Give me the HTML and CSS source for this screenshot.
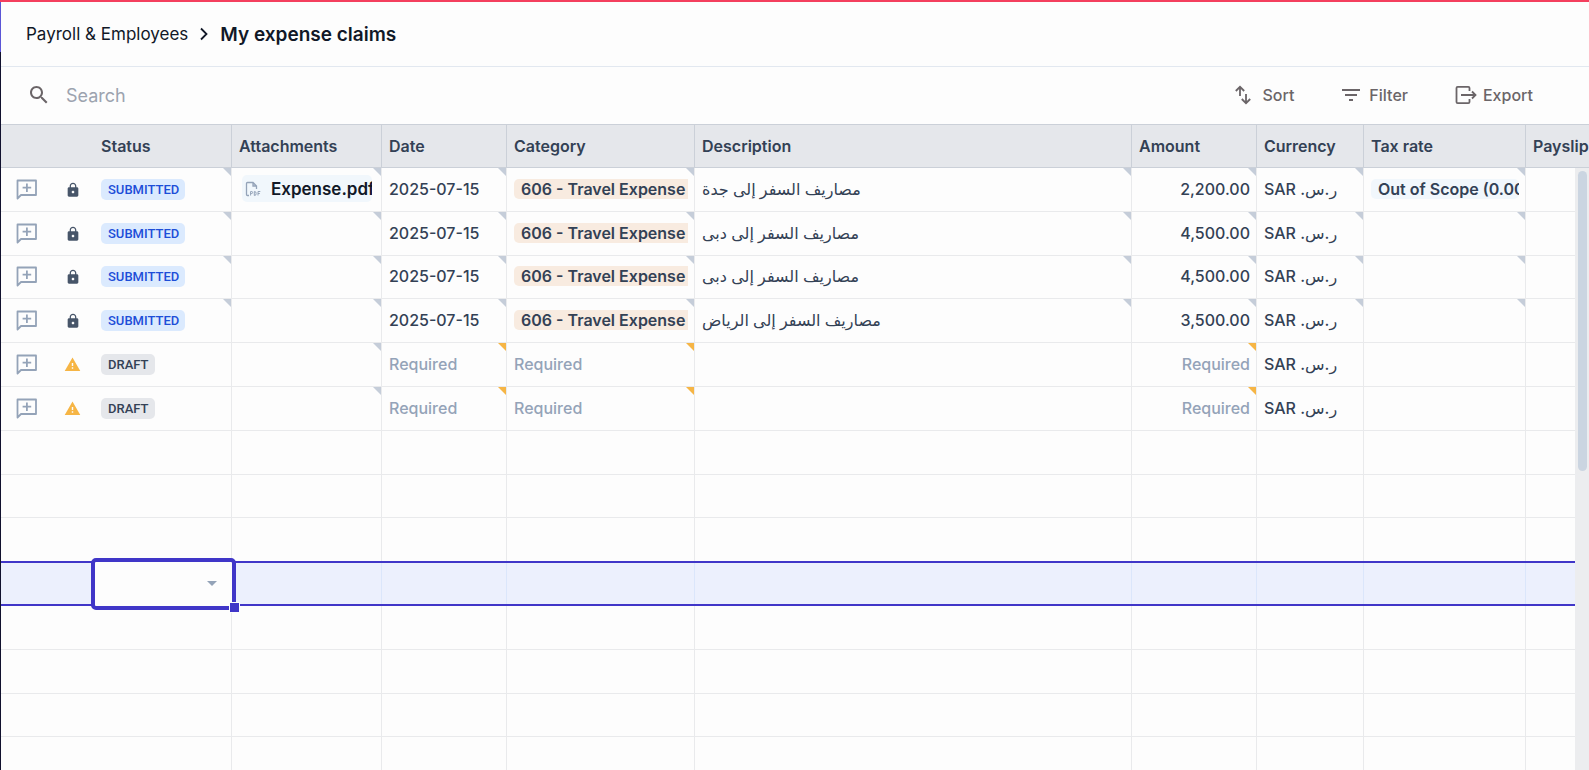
FILE: index.html
```html
<!DOCTYPE html>
<html lang="en">
  <head>
    <meta charset="UTF-8" />
    <meta name="viewport" content="width=device-width, initial-scale=1.0" />
    <title>My expense claims</title>
    <link rel="stylesheet" href="styles.css">
  </head>

  <body>
    <!-- icons used more than once -->
    <svg class="defs" width="0" height="0">
      <symbol id="comment" viewBox="0 0 24 24">
        <path d="M3.500 3.500h18.500v14.500H7L3.500 21.500z" fill="none" stroke="#94a3b8" stroke-width="1.800" stroke-linejoin="round" />
        <path d="M12.900 6.500v8.500M8.600 10.700h8.600" stroke="#94a3b8" stroke-width="1.800" />
      </symbol>
      <symbol id="lock" viewBox="0 0 24 24">
        <path fill="#475569" d="M18 8h-1V6c0-2.760-2.240-5-5-5S7 3.240 7 6v2H6c-1.100 0-2 .9-2 2v10c0 1.100.9 2 2 2h12c1.100 0 2-.9 2-2V10c0-1.100-.9-2-2-2zm-6 9c-1.100 0-2-.9-2-2s.9-2 2-2 2 .9 2 2-.9 2-2 2zm3.100-9H8.900V6c0-1.710 1.390-3.100 3.100-3.100s3.100 1.390 3.100 3.100v2z" />
      </symbol>
      <symbol id="warn" viewBox="0 0 24 24">
        <path fill="#f6b545" d="M1 21h22L12 2 1 21zm12-3h-2v-2h2v2zm0-4h-2v-4h2v4z" />
      </symbol>
    </svg>

    <div class="app">
      <aside class="rail"></aside>
      <main class="page">
        <nav class="crumbs">
          <a href="#">Payroll &amp; Employees</a>
          <svg width="12" height="16" viewBox="0 0 12 16"><path d="M3 2.500l5.500 5.500L3 13.500" fill="none" stroke="#111827" stroke-width="1.800" /></svg>
          <h1>My expense claims</h1>
        </nav>

        <div class="toolbar">
          <label class="search">
            <svg width="24" height="24" viewBox="0 0 24 24"><path fill="#6b6568" d="M15.500 14h-.79l-.28-.27C15.410 12.590 16 11.110 16 9.500 16 5.910 13.090 3 9.500 3S3 5.910 3 9.500 5.910 16 9.500 16c1.610 0 3.090-.59 4.230-1.570l.27.28v.79l5 4.990L20.490 19l-4.990-5zm-6 0C7.010 14 5 11.990 5 9.500S7.010 5 9.500 5 14 7.010 14 9.500 11.990 14 9.500 14z" /></svg>
            <input type="text" placeholder="Search" aria-label="Search" />
          </label>
          <div class="actions">
            <button type="button">
              <svg width="24" height="24" viewBox="0 0 24 24" fill="none" stroke="#6b6568" stroke-width="1.800"><path d="M8 13V4M3.800 8L8 3.800 12.200 8M14 11v9M9.800 16l4.200 4.200 4.200-4.200" /></svg>
              Sort
            </button>
            <button type="button">
              <svg width="24" height="24" viewBox="0 0 24 24"><path fill="#6b6568" d="M10 18h4v-2h-4v2zM3 6v2h18V6H3zm3 7h12v-2H6v2z" /></svg>
              Filter
            </button>
            <button type="button">
              <svg width="24" height="24" viewBox="0 0 24 24" fill="none" stroke="#6b6568" stroke-width="1.800"><path d="M16.500 8V5q0-1.200-1.200-1.200H4.700Q3.500 3.800 3.500 5v14q0 1.200 1.200 1.200h10.600Q16.500 20.200 16.500 19v-3M8 12h14.500M19 8.500l3.500 3.500L19 15.500" /></svg>
              Export
            </button>
          </div>
        </div>

        <div class="grid">
          <table>
            <colgroup>
              <col class="c-note"><col class="c-state"><col class="c-status"><col class="c-files"><col class="c-date"><col class="c-category"><col><col class="c-amount"><col class="c-currency"><col class="c-tax"><col class="c-payslip">
            </colgroup>
            <thead>
              <tr>
                <th class="bare"></th>
                <th class="bare"></th>
                <th>Status</th>
                <th>Attachments</th>
                <th>Date</th>
                <th>Category</th>
                <th>Description</th>
                <th>Amount</th>
                <th>Currency</th>
                <th>Tax rate</th>
                <th>Payslip</th>
              </tr>
            </thead>
            <tbody>
              <tr>
                <td class="bare note"><svg width="24" height="24"><use href="#comment" /></svg></td>
                <td class="bare state"><svg width="16" height="16"><use href="#lock" /></svg></td>
                <td class="flag"><span class="badge submitted">SUBMITTED</span></td>
                <td class="flag">
                  <div class="file">
                    <svg width="16" height="16" viewBox="0 0 16 16" fill="none" stroke="#94a3b8"><path d="M4 14.500H2.500q-1 0-1-1v-11q0-1 1-1H8l3.500 3.500V8M8 1.500V5h3.500" stroke-width="1.300" /><path d="M5.600 14.500v-4h1.200q.8 0 .8 1t-.8 1H5.600M9.300 10.500v4h.6q1.200 0 1.200-2t-1.200-2zM13 14.500v-4h2.300M13 12.500h1.800" /></svg>
                    <span>Expense.pdf</span>
                  </div>
                </td>
                <td class="flag">2025-07-15</td>
                <td class="flag"><div class="tag travel">606 - Travel Expense</div></td>
                <td class="flag">مصاريف السفر إلى جدة</td>
                <td class="flag num">2,200.00</td>
                <td class="flag">SAR ر.س.&rlm;</td>
                <td class="flag"><div class="tag tax">Out of Scope (0.00%)</div></td>
                <td></td>
              </tr>
              <tr>
                <td class="bare note"><svg width="24" height="24"><use href="#comment" /></svg></td>
                <td class="bare state"><svg width="16" height="16"><use href="#lock" /></svg></td>
                <td class="flag"><span class="badge submitted">SUBMITTED</span></td>
                <td class="flag"></td>
                <td class="flag">2025-07-15</td>
                <td class="flag"><div class="tag travel">606 - Travel Expense</div></td>
                <td class="flag">مصاريف السفر إلى دبى</td>
                <td class="flag num">4,500.00</td>
                <td class="flag">SAR ر.س.&rlm;</td>
                <td class="flag"></td>
                <td></td>
              </tr>
              <tr>
                <td class="bare note"><svg width="24" height="24"><use href="#comment" /></svg></td>
                <td class="bare state"><svg width="16" height="16"><use href="#lock" /></svg></td>
                <td class="flag"><span class="badge submitted">SUBMITTED</span></td>
                <td class="flag"></td>
                <td class="flag">2025-07-15</td>
                <td class="flag"><div class="tag travel">606 - Travel Expense</div></td>
                <td class="flag">مصاريف السفر إلى دبى</td>
                <td class="flag num">4,500.00</td>
                <td class="flag">SAR ر.س.&rlm;</td>
                <td class="flag"></td>
                <td></td>
              </tr>
              <tr>
                <td class="bare note"><svg width="24" height="24"><use href="#comment" /></svg></td>
                <td class="bare state"><svg width="16" height="16"><use href="#lock" /></svg></td>
                <td class="flag"><span class="badge submitted">SUBMITTED</span></td>
                <td class="flag"></td>
                <td class="flag">2025-07-15</td>
                <td class="flag"><div class="tag travel">606 - Travel Expense</div></td>
                <td class="flag">مصاريف السفر إلى الرياض</td>
                <td class="flag num">3,500.00</td>
                <td class="flag">SAR ر.س.&rlm;</td>
                <td class="flag"></td>
                <td></td>
              </tr>
              <tr>
                <td class="bare note"><svg width="24" height="24"><use href="#comment" /></svg></td>
                <td class="bare state"><svg width="17" height="17"><use href="#warn" /></svg></td>
                <td><span class="badge draft">DRAFT</span></td>
                <td class="flag"></td>
                <td class="flag missing">Required</td>
                <td class="flag missing">Required</td>
                <td></td>
                <td class="flag missing num">Required</td>
                <td>SAR ر.س.&rlm;</td>
                <td></td>
                <td></td>
              </tr>
              <tr>
                <td class="bare note"><svg width="24" height="24"><use href="#comment" /></svg></td>
                <td class="bare state"><svg width="17" height="17"><use href="#warn" /></svg></td>
                <td><span class="badge draft">DRAFT</span></td>
                <td class="flag"></td>
                <td class="flag missing">Required</td>
                <td class="flag missing">Required</td>
                <td></td>
                <td class="flag missing num">Required</td>
                <td>SAR ر.س.&rlm;</td>
                <td></td>
                <td></td>
              </tr>
              <tr><td class="bare"></td><td class="bare"></td><td></td><td></td><td></td><td></td><td></td><td></td><td></td><td></td><td></td></tr>
              <tr><td class="bare"></td><td class="bare"></td><td></td><td></td><td></td><td></td><td></td><td></td><td></td><td></td><td></td></tr>
              <tr><td class="bare"></td><td class="bare"></td><td></td><td></td><td></td><td></td><td></td><td></td><td></td><td></td><td></td></tr>
              <tr class="selected">
                <td class="bare"></td>
                <td class="bare"></td>
                <td class="editing">
                  <select aria-label="Status">
                    <option></option>
                    <option>Draft</option>
                    <option>Submitted</option>
                  </select>
                  <svg class="caret" width="10" height="5" viewBox="0 0 10 5"><path d="M0 0h10L5 5z" fill="#94a3b8" /></svg>
                  <span class="handle"></span>
                </td>
                <td></td><td></td><td></td><td></td><td></td><td></td><td></td><td></td>
              </tr>
              <tr><td class="bare"></td><td class="bare"></td><td></td><td></td><td></td><td></td><td></td><td></td><td></td><td></td><td></td></tr>
              <tr><td class="bare"></td><td class="bare"></td><td></td><td></td><td></td><td></td><td></td><td></td><td></td><td></td><td></td></tr>
              <tr><td class="bare"></td><td class="bare"></td><td></td><td></td><td></td><td></td><td></td><td></td><td></td><td></td><td></td></tr>
              <tr><td class="bare"></td><td class="bare"></td><td></td><td></td><td></td><td></td><td></td><td></td><td></td><td></td><td></td></tr>
            </tbody>
          </table>
          <div class="scrollbar"><div class="thumb"></div></div>
        </div>
      </main>
    </div>
  </body>
</html>
```
FILE: styles.css
```css
* {
  box-sizing: border-box;
}

body {
  margin: 0;
  background: #fdfdfd;
  color: #334155;
  font-family: Inter, "Noto Sans", "DejaVu Sans", sans-serif;
  font-size: 16px;
  font-weight: 500;
}

.defs {
  position: absolute;
}

.app {
  display: flex;
  height: 100vh;
  overflow: hidden;
  border-top: 2px solid #f43f5e;
}

.rail {
  width: 1px;
  background: linear-gradient(#5b55d6 50px, #11112e 50px);
}

.page {
  flex: 1;
  min-width: 0;
  display: flex;
  flex-direction: column;
}

/* breadcrumb */
.crumbs {
  display: flex;
  align-items: center;
  gap: 10px;
  height: 65px;
  flex: none;
  padding: 0 25px;
  border-bottom: 1px solid #e2e8f0;
  color: #111827;
}

.crumbs a {
  color: inherit;
  font-size: 17px;
  font-weight: 400;
  text-decoration: none;
}

.crumbs h1 {
  margin: 0;
  font-size: 19px;
  font-weight: 600;
}

/* search and actions */
.toolbar {
  display: flex;
  align-items: center;
  justify-content: space-between;
  height: 57px;
  flex: none;
  padding: 0 56px 1px 26px;
}

.search {
  display: flex;
  align-items: center;
  flex: 1;
  gap: 15px;
}

.search input {
  flex: 1;
  padding: 0;
  border: 0;
  outline: 0;
  background: none;
  color: #334155;
  font: 400 18px Inter, sans-serif;
}

.search input::placeholder {
  color: #9ca3af;
}

.actions {
  display: flex;
  gap: 45px;
}

.actions button {
  display: flex;
  align-items: center;
  gap: 6px;
  padding: 0;
  border: 0;
  background: none;
  color: #6b6568;
  font: 500 16px Inter, sans-serif;
}

/* grid */
.grid {
  position: relative;
  flex: 1;
  min-height: 0;
  overflow: hidden;
  border-top: 1px solid #cbd0d8;
}

table {
  width: 100%;
  min-width: 1200px;
  table-layout: fixed;
  border-collapse: separate;
  border-spacing: 0;
}

.c-note { width: 50px; }
.c-state { width: 43px; }
.c-status { width: 138px; }
.c-files { width: 150px; }
.c-date { width: 125px; }
.c-category { width: 188px; }
.c-amount { width: 125px; }
.c-currency { width: 107px; }
.c-tax { width: 162px; }
.c-payslip { width: 63px; }

th,
td {
  position: relative;
  padding: 0 6px 0 7px;
  border-right: 1px solid #e9eaec;
  border-bottom: 1px solid #e9eaec;
  text-align: left;
  white-space: nowrap;
}

th {
  height: 43px;
  background: #e5e7eb;
  border-color: #cbd0d8;
  font-weight: 600;
}

th:last-child,
td:last-child,
.bare {
  border-right: 0;
}

td {
  height: 44px;
  padding-bottom: 2px;
}

tr:nth-child(5n + 3) td {
  height: 43px;
}

td svg {
  display: block;
}

.note {
  padding-left: 13px;
}

.state {
  padding: 0;
}

.state svg {
  margin: 0 auto;
}

.num {
  text-align: right;
}

/* corner marks */
.flag::after {
  content: "";
  position: absolute;
  top: 0;
  right: 0;
  border-top: 8px solid #c5cdd9;
  border-left: 8px solid transparent;
}

.missing {
  color: #94a3b8;
}

.missing::after {
  border-top-color: #f6b545;
}

.badge {
  display: inline-block;
  padding: 0 6px 0 7px;
  border-radius: 5px;
  font-family: Roboto, sans-serif;
  font-size: 13px;
  line-height: 21px;
}

.submitted {
  background: #dbeafe;
  color: #1d4ed8;
}

.draft {
  background: #e5e7eb;
}

.tag {
  padding-left: 7px;
  overflow: hidden;
  border-radius: 5px;
  font-weight: 600;
  line-height: 20px;
}

.travel {
  background: #f8ebe0;
  border-radius: 5px 0 0 5px;
}

.tax {
  background: #f1f7fc;
}

.file {
  display: flex;
  align-items: center;
  gap: 10px;
  height: 27px;
  margin: 0 3px;
  padding-left: 3px;
  overflow: hidden;
  border-radius: 5px;
  background: #f1f7fc;
  color: #111827;
  font-size: 17px;
  font-weight: 600;
}

.file svg {
  flex: none;
}

/* selected row */
.selected td::before {
  content: "";
  position: absolute;
  inset: -1px -1px -1px 0;
  border: solid #4036c8;
  border-width: 2px 0;
  pointer-events: none;
}

.selected td {
  background: #ecf0fd;
  border-right-color: #dbe6fb;
}

.selected .editing {
  z-index: 1;
}

.editing select {
  position: absolute;
  inset: -4px -5px -5px -3px;
  border: 4px solid #4036c8;
  border-radius: 5px;
  background: #fdfdfd;
  appearance: none;
}

.caret {
  position: absolute;
  top: 19px;
  right: 14px;
  pointer-events: none;
}

.handle {
  position: absolute;
  right: -9px;
  bottom: -8px;
  width: 11px;
  height: 11px;
  border: 1px solid #fdfdfd;
  background: #4036c8;
}

.scrollbar {
  position: absolute;
  z-index: 2;
  top: 43px;
  right: 0;
  bottom: 0;
  width: 14px;
  padding: 3px 2px 0 3px;
  background: #ecedef;
}

.thumb {
  height: 300px;
  border-radius: 5px;
  background: #cbd5e1;
}
```
